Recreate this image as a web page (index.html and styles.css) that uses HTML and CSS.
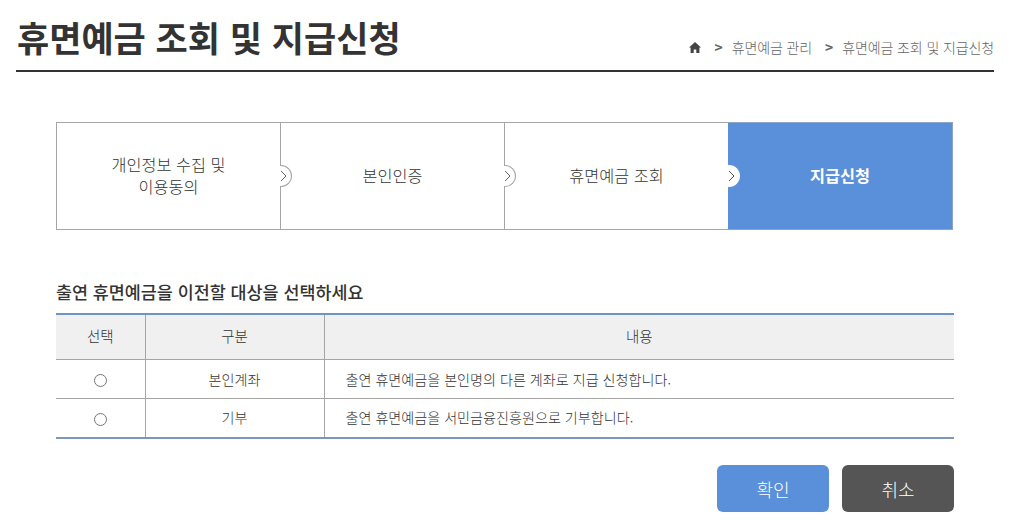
FILE: index.html
```html
<!DOCTYPE html>
<html lang="ko">
<head>
<meta charset="utf-8">
<title>휴면예금 조회 및 지급신청</title>
<link rel="stylesheet" href="styles.css">
</head>
<body>
<header class="page-head">
  <h1 class="title">휴면예금 조회 및 지급신청</h1>
  <nav class="crumbs">
    <svg class="home" viewBox="0 0 12 11" width="12" height="11"><path d="M6 0 L12 5.6 L10.4 5.6 L10.4 11 L7.3 11 L7.3 7.4 L4.7 7.4 L4.7 11 L1.6 11 L1.6 5.6 L0 5.6 Z" fill="#444"/></svg>
    <span class="sep">&gt;</span><span>휴면예금 관리</span>
    <span class="sep sep-2">&gt;</span><span>휴면예금 조회 및 지급신청</span>
  </nav>
</header>
<main class="content">
  <ol class="steps">
    <li class="step">개인정보 수집 및<br>이용동의</li>
    <li class="step">본인인증<span class="notch"><svg viewBox="0 0 7 12" width="7" height="12"><path d="M1 1 L6 6 L1 11" fill="none" stroke="#666" stroke-width="1"/></svg></span></li>
    <li class="step">휴면예금 조회<span class="notch"><svg viewBox="0 0 7 12" width="7" height="12"><path d="M1 1 L6 6 L1 11" fill="none" stroke="#666" stroke-width="1"/></svg></span></li>
    <li class="step step-on">지급신청<span class="notch notch-on"><svg viewBox="0 0 7 12" width="7" height="12"><path d="M1 1 L6 6 L1 11" fill="none" stroke="#555" stroke-width="1"/></svg></span></li>
  </ol>
  <h2 class="subtitle">출연 휴면예금을 이전할 대상을 선택하세요</h2>
  <table class="choices">
    <colgroup><col class="c1"><col class="c2"><col></colgroup>
    <thead><tr><th>선택</th><th>구분</th><th>내용</th></tr></thead>
    <tbody>
      <tr><td><span class="radio"></span></td><td>본인계좌</td><td class="desc">출연 휴면예금을 본인명의 다른 계좌로 지급 신청합니다.</td></tr>
      <tr class="last"><td><span class="radio"></span></td><td>기부</td><td class="desc">출연 휴면예금을 서민금융진흥원으로 기부합니다.</td></tr>
    </tbody>
  </table>
  <div class="actions">
    <a class="btn btn-ok">확인</a>
    <a class="btn btn-cancel">취소</a>
  </div>
</main>
</body>
</html>
```
FILE: styles.css
```css
* { box-sizing: border-box; }
html, body { margin: 0; padding: 0; background: #fff; }
body {
  width: 1022px;
  height: 531px;
  overflow: hidden;
  font-family: "Noto Sans CJK KR", "Liberation Sans", sans-serif;
  color: #333;
}
.page-head {
  margin: 0 28px 0 16px;
  height: 72px;
  border-bottom: 2px solid #333;
  display: flex;
  justify-content: space-between;
  align-items: flex-end;
}
.title {
  margin: 0 0 8px 1px;
  font-size: 35px;
  line-height: 50px;
  font-weight: 700;
  color: #333;
}
.crumbs {
  display: flex;
  align-items: center;
  font-size: 14px;
  font-weight: 300;
  color: #666;
  line-height: 20px;
  margin-bottom: 13px;
  letter-spacing: -0.12px;
}
.home { margin-right: 14px; }
.sep { margin-right: 9px; font-weight: 700; color: #666; }
.sep-2 { margin-left: 13px; }
.content { padding: 50px 68px 0 56px; }
.steps {
  list-style: none;
  margin: 0;
  padding: 0;
  width: 897px;
  height: 108px;
  display: grid;
  grid-template-columns: 223px 224px 224px 224px;
  border: 1px solid #a5a5a5;
}
.step {
  position: relative;
  display: flex;
  align-items: center;
  justify-content: center;
  text-align: center;
  font-size: 16.3px;
  font-weight: 300;
  line-height: 22px;
  color: #333;
  border-left: 1px solid #a5a5a5;
  padding-bottom: 2px;
}
.step:first-child { border-left: 0; }
.step-on {
  background: #5a8fda;
  color: #fff;
  font-weight: 700;
  margin: -1px -1px -1px 0;
  border: 1px solid #8ba4c6;
  border-left: 0;
}
.notch {
  position: absolute;
  left: -1px;
  top: 42px;
  width: 12px;
  height: 22px;
  background: #fff;
  border: 1px solid #a5a5a5;
  border-left: 0;
  border-radius: 0 11px 11px 0;
  display: flex;
  align-items: center;
  justify-content: flex-start;
}
.notch-on { border: 0; top: 42px; left: 0; }
.subtitle {
  margin: 50px 0 0;
  font-size: 17.4px;
  line-height: 24px;
  font-weight: 500;
  color: #333;
}
.choices {
  margin-top: 9px;
  width: 898px;
  border-collapse: collapse;
  table-layout: fixed;
  border-top: 2px solid #6d93c7;
  border-bottom: 2px solid #7d97b8;
  font-size: 14.1px;
  font-weight: 300;
  color: #333;
}
.c1 { width: 89px; }
.c2 { width: 179px; }
.choices th, .choices td {
  text-align: center;
  padding: 0;
  border-left: 1px solid #a5a5a5;
  border-top: 1px solid #a5a5a5;
  font-weight: 300;
}
.choices thead th { border-top: 0; height: 45px; background: #f0f0f0; font-size: 14.5px; padding-bottom: 2px; }
.choices tbody td { height: 39px; }
.choices tbody .last td { height: 40px; padding-bottom: 1px; }
.choices th:first-child, .choices td:first-child { border-left: 0; }
.choices td.desc { text-align: left; padding-left: 21px; }
.radio {
  display: inline-block;
  width: 13px;
  height: 13px;
  border: 1px solid #767676;
  border-radius: 50%;
  background: #fff;
  vertical-align: middle;
}
.actions {
  margin-top: 26px;
  width: 898px;
  display: flex;
  justify-content: flex-end;
  gap: 13px;
}
.btn {
  width: 112px;
  height: 47px;
  border-radius: 6px;
  display: flex;
  align-items: center;
  justify-content: center;
  color: #fff;
  font-size: 18px;
  font-weight: 300;
}
.btn-ok { background: #5a8fda; }
.btn-cancel { background: #555; }
```
